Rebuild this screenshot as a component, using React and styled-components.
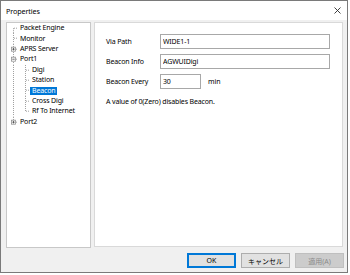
import React from "react";
import styled, { createGlobalStyle } from "styled-components";

const GlobalStyle = createGlobalStyle`
  html, body {
    margin: 0;
    padding: 0;
    background: #ffffff;
  }
  body {
    font-family: "Noto Sans", "Noto Sans CJK JP", sans-serif;
    font-size: 7px;
    color: #000;
  }
`;

const ROW_H = 10.4;

const treeItems = [
  { label: "Packet Engine", level: 0, first: true },
  { label: "Monitor", level: 0 },
  { label: "APRS Server", level: 0, box: "+" },
  { label: "Port1", level: 0, box: "-" },
  { label: "Digi", level: 1 },
  { label: "Station", level: 1 },
  { label: "Beacon", level: 1, selected: true },
  { label: "Cross Digi", level: 1 },
  { label: "Rf To Internet", level: 1, lastChild: true },
  { label: "Port2", level: 0, box: "+", last: true },
];

const fields = [
  { label: "Via Path", value: "WIDE1-1" },
  { label: "Beacon Info", value: "AGWUIDigi" },
  { label: "Beacon Every", value: "30", short: true, unit: "min" },
];

const Connector = ({ item }) => {
  const w = item.level === 0 ? 11 : 23;
  const mid = ROW_H / 2;
  const line = { stroke: "#a0a0a0", strokeWidth: 1, strokeDasharray: "1 1" };
  return (
    <svg width={w} height={ROW_H} viewBox={`0 0 ${w} ${ROW_H}`}>
      {item.level === 0 ? (
        <>
          <line x1="6.5" x2="6.5" y1={item.first ? mid : 0} y2={item.last ? mid : ROW_H} {...line} />
          <line x1="7" x2={w} y1={mid} y2={mid} {...line} />
          {item.box && (
            <g>
              <rect x="4.5" y={mid - 2} width="4" height="4" fill="#fff" stroke="#919191" strokeWidth="0.8" />
              <line x1="5.3" x2="7.7" y1={mid} y2={mid} stroke="#333" strokeWidth="0.7" />
              {item.box === "+" && (
                <line x1="6.5" x2="6.5" y1={mid - 1.2} y2={mid + 1.2} stroke="#333" strokeWidth="0.7" />
              )}
            </g>
          )}
        </>
      ) : (
        <>
          <line x1="6.5" x2="6.5" y1="0" y2={ROW_H} {...line} />
          <line x1="18.5" x2="18.5" y1="0" y2={item.lastChild ? mid : ROW_H} {...line} />
          <line x1="19" x2={w} y1={mid} y2={mid} {...line} />
        </>
      )}
    </svg>
  );
};

const CloseIcon = () => (
  <svg width="7" height="7" viewBox="0 0 7 7">
    <path d="M0.5 0.5 L6.5 6.5 M6.5 0.5 L0.5 6.5" stroke="#2b2b2b" strokeWidth="0.9" />
  </svg>
);

const App = () => {
  return (
    <>
      <GlobalStyle />
      <Window>
        <TitleBar>
          <Title>Properties</Title>
          <CloseButton>
            <CloseIcon />
          </CloseButton>
        </TitleBar>
        <Body>
          <Tree>
            {treeItems.map((item) => (
              <TreeRow key={item.label}>
                <Connector item={item} />
                <TreeLabel $selected={item.selected}>{item.label}</TreeLabel>
              </TreeRow>
            ))}
          </Tree>
          <Panel>
            <Form>
              {fields.map((f) => (
                <React.Fragment key={f.label}>
                  <FieldLabel>{f.label}</FieldLabel>
                  <FieldCell>
                    <TextBox $short={f.short} value={f.value} readOnly />
                    {f.unit && <Unit>{f.unit}</Unit>}
                  </FieldCell>
                </React.Fragment>
              ))}
            </Form>
            <Note>A value of 0(Zero) disables Beacon.</Note>
          </Panel>
        </Body>
        <Footer>
          <Button $default>OK</Button>
          <Button>キャンセル</Button>
          <Button $disabled>適用(A)</Button>
        </Footer>
      </Window>
    </>
  );
};

const Window = styled.div`
  box-sizing: border-box;
  width: 348px;
  height: 273px;
  border: 1px solid #7a7a7a;
  background: #f0f0f0;
  display: flex;
  flex-direction: column;
`;

const TitleBar = styled.div`
  height: 19px;
  background: #ffffff;
  display: flex;
  align-items: center;
  justify-content: space-between;
  padding: 0 5px 0 5px;
`;

const Title = styled.span`
  font-size: 7.2px;
  letter-spacing: -0.1px;
`;

const CloseButton = styled.span`
  display: flex;
  align-items: center;
  margin-right: 1px;
`;

const Body = styled.div`
  display: flex;
  gap: 3px;
  padding: 2px 4px 0 5px;
  height: 226px;
`;

const Tree = styled.div`
  box-sizing: border-box;
  width: 85px;
  height: 226px;
  background: #ffffff;
  border: 1px solid #c8c8c8;
  padding-top: 0;
`;

const TreeRow = styled.div`
  display: flex;
  align-items: center;
  height: ${ROW_H}px;
`;

const TreeLabel = styled.span`
  padding: 0 2px;
  height: 8px;
  line-height: 8px;
  font-size: 7px;
  letter-spacing: -0.15px;
  white-space: nowrap;
  background: ${(p) => (p.$selected ? "#0078d7" : "transparent")};
  color: ${(p) => (p.$selected ? "#ffffff" : "#000000")};
`;

const Panel = styled.div`
  box-sizing: border-box;
  width: 249px;
  height: 225px;
  background: #ffffff;
  border: 1px solid #d9d9d9;
  padding: 11px 0 0 11px;
`;

const Form = styled.div`
  display: grid;
  grid-template-columns: 54px 170px;
  row-gap: 5px;
  align-items: center;
`;

const FieldLabel = styled.span`
  font-size: 7px;
  letter-spacing: -0.15px;
`;

const FieldCell = styled.div`
  display: flex;
  align-items: center;
  gap: 7px;
`;

const TextBox = styled.input`
  box-sizing: border-box;
  width: ${(p) => (p.$short ? "41px" : "170px")};
  height: 15px;
  border: 1px solid #a8a8a8;
  padding: 0 2px;
  margin: 0;
  font-family: "Noto Sans", sans-serif;
  font-size: 7px;
  letter-spacing: -0.15px;
  color: #000;
  outline: none;
  background: #fff;
`;

const Unit = styled.span`
  font-size: 7px;
`;

const Note = styled.p`
  margin: 8px 0 0 0;
  font-size: 7px;
  letter-spacing: -0.15px;
`;

const Footer = styled.div`
  flex: 1;
  display: flex;
  justify-content: flex-end;
  align-items: flex-start;
  gap: 5px;
  padding: 5px 3px 0 0;
`;

const Button = styled.div`
  box-sizing: border-box;
  width: 49px;
  height: 15px;
  display: flex;
  align-items: center;
  justify-content: center;
  font-size: 7px;
  font-family: "Noto Sans", "Noto Sans CJK JP", sans-serif;
  background: ${(p) => (p.$disabled ? "#cccccc" : "#e1e1e1")};
  color: ${(p) => (p.$disabled ? "#8a8a8a" : "#000")};
  border: 1px solid
    ${(p) => (p.$default ? "#0078d7" : p.$disabled ? "#bfbfbf" : "#adadad")};
  box-shadow: ${(p) => (p.$default ? "inset 0 0 0 1px #0078d7" : "none")};
`;

export default App;
